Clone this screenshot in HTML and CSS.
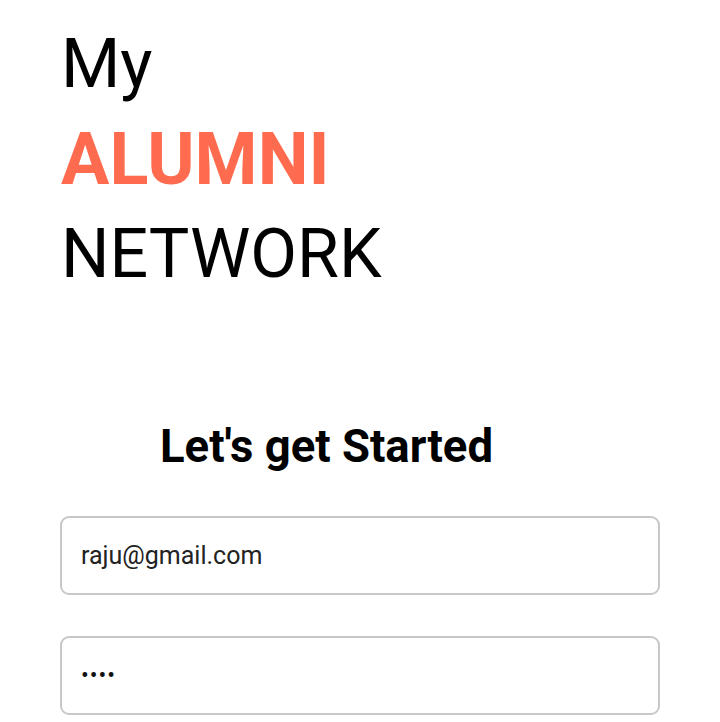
FILE: index.html
```html
<!DOCTYPE html>
<html>
<head>
<meta charset="utf-8">
<link rel="stylesheet" href="styles.css">
</head>
<body>
<main class="screen">
  <h1 class="brand">
    <span class="brand-line">My</span>
    <span class="brand-line accent">ALUMNI</span>
    <span class="brand-line">NETWORK</span>
  </h1>
  <h2 class="subtitle">Let's get Started</h2>
  <form class="form">
    <div class="field"><span class="field-text">raju@gmail.com</span></div>
    <div class="field"><span class="field-dots">••••</span></div>
  </form>
</main>
</body>
</html>
```
FILE: styles.css
```css
html, body {
  margin: 0;
  padding: 0;
  background: #ffffff;
}
body {
  font-family: Roboto, "Noto Sans", sans-serif;
  color: #000;
}
.screen {
  width: 720px;
  height: 722px;
  overflow: hidden;
  padding: 0 60px;
  box-sizing: border-box;
}
.brand {
  margin: 0;
  padding-top: 17px;
  padding-left: 1px;
  display: flex;
  flex-direction: column;
  font-size: 68px;
  font-weight: 400;
  line-height: 95px;
}
.brand-line {
  display: block;
}
.accent {
  color: #ff6b4f;
  font-weight: 700;
  font-size: 72px;
}
.subtitle {
  margin: 115px 0 0;
  padding-left: 100px;
  font-size: 45.5px;
  font-weight: 700;
  line-height: 60px;
}
.form {
  margin-top: 39px;
  display: flex;
  flex-direction: column;
  gap: 41px;
}
.field {
  height: 79px;
  border: 2px solid #c8c8c8;
  border-radius: 9px;
  box-sizing: border-box;
  display: flex;
  align-items: center;
  padding-left: 19px;
}
.field-text {
  font-size: 25px;
  color: #222;
}
.field-dots {
  font-size: 23px;
  letter-spacing: 1px;
  color: #111;
}
```
